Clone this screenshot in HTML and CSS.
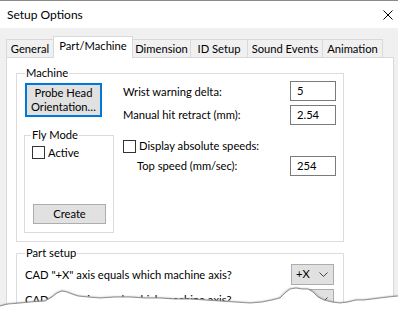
FILE: index.html
```html
<!DOCTYPE html>
<html>
<head>
<meta charset="utf-8">
<link rel="stylesheet" href="styles.css">
</head>
<body>
<div class="window">
  <div class="titlebar">
    <span class="title">Setup Options</span>
    <svg class="close" width="10" height="10" viewBox="0 0 10 10"><path d="M0.5 0.5 L9.5 9.5 M9.5 0.5 L0.5 9.5" stroke="#000" stroke-width="1" fill="none"/></svg>
  </div>
  <div class="body">
    <div class="tabs">
      <div class="tab t-general">General</div>
      <div class="tab active t-part">Part/Machine</div>
      <div class="tab t-dim">Dimension</div>
      <div class="tab t-id">ID Setup</div>
      <div class="tab t-sound">Sound Events</div>
      <div class="tab t-anim">Animation</div>
    </div>
    <div class="panel">
      <fieldset class="group machine">
        <legend>Machine</legend>
        <div class="machine-cols">
          <div class="left-col">
            <div class="btn probe">Probe Head<br>Orientation…</div>
            <fieldset class="group fly">
              <legend>Fly Mode</legend>
              <div class="check"><span class="box"></span><span>Active</span></div>
              <div class="btn create">Create</div>
            </fieldset>
          </div>
          <div class="right-col">
            <div class="row r1"><span class="lbl">Wrist warning delta:</span><span class="input">5</span></div>
            <div class="row r2"><span class="lbl">Manual hit retract (mm):</span><span class="input">2.54</span></div>
            <div class="check check-row"><span class="box"></span><span>Display absolute speeds:</span></div>
            <div class="row r3"><span class="lbl indent">Top speed (mm/sec):</span><span class="input">254</span></div>
          </div>
        </div>
      </fieldset>
      <fieldset class="group part">
        <legend>Part setup</legend>
        <div class="row prow"><span class="lbl">CAD "+X" axis equals which machine axis?</span><span class="combo"><span>+X</span><svg width="9" height="5" viewBox="0 0 9 5"><path d="M0.5 0.5 L4.5 4.5 L8.5 0.5" stroke="#444" stroke-width="1" fill="none"/></svg></span></div>
        <div class="row prow second"><span class="lbl">CAD "+Y" axis equals which machine axis?</span><span class="combo"><span>+Y</span><svg width="9" height="5" viewBox="0 0 9 5"><path d="M0.5 0.5 L4.5 4.5 L8.5 0.5" stroke="#444" stroke-width="1" fill="none"/></svg></span></div>
      </fieldset>
    </div>
  </div>
  <svg class="torn" width="398" height="40" viewBox="0 0 398 40">
    <defs>
      <filter id="blur" x="-5%" y="-50%" width="110%" height="200%"><feGaussianBlur stdDeviation="1.2"/></filter>
    </defs>
    <path d="M0 26 L8 24 L20 23 L30 22 L45 21 L52 17 L57 13 L62 11 L67 12 L72 14 L78 16 L88 17 L100 18 L115 17 L130 17 L145 18 L160 18 L175 19 L190 19 L205 20 L220 21 L235 22 L250 23 L262 22 L272 20 L280 18 L285 13 L290 9 L296 8 L302 9 L308 9 L313 12 L318 17 L324 20 L332 22 L340 23 L348 22 L356 20 L364 20 L372 19 L380 18 L388 17 L398 16" stroke="#777" stroke-width="2.2" fill="none" filter="url(#blur)" transform="translate(0 1)"/>
    <path d="M0 26 L8 24 L20 23 L30 22 L45 21 L52 17 L57 13 L62 11 L67 12 L72 14 L78 16 L88 17 L100 18 L115 17 L130 17 L145 18 L160 18 L175 19 L190 19 L205 20 L220 21 L235 22 L250 23 L262 22 L272 20 L280 18 L285 13 L290 9 L296 8 L302 9 L308 9 L313 12 L318 17 L324 20 L332 22 L340 23 L348 22 L356 20 L364 20 L372 19 L380 18 L388 17 L398 16 L398 40 L0 40 Z" fill="#fff"/>
    <path d="M0 26 L8 24 L20 23 L30 22 L45 21 L52 17 L57 13 L62 11 L67 12 L72 14 L78 16 L88 17 L100 18 L115 17 L130 17 L145 18 L160 18 L175 19 L190 19 L205 20 L220 21 L235 22 L250 23 L262 22 L272 20 L280 18 L285 13 L290 9 L296 8 L302 9 L308 9 L313 12 L318 17 L324 20 L332 22 L340 23 L348 22 L356 20 L364 20 L372 19 L380 18 L388 17 L398 16" stroke="#8a8a8a" stroke-width="0.9" fill="none"/>
  </svg>
</div>
</body>
</html>
```

FILE: styles.css
```css
html, body {
  margin: 0;
  padding: 0;
}
body {
  width: 398px;
  height: 320px;
  overflow: hidden;
  font-family: Lato, "Noto Sans", sans-serif;
  font-size: 11.2px;
  color: #000;
}
.window {
  position: relative;
  height: 320px;
  background: #f0f0f0;
  overflow: hidden;
}
.titlebar {
  box-sizing: border-box;
  height: 28px;
  background: #fff;
  border-top: 1px solid #8a8a8a;
  display: flex;
  align-items: center;
  justify-content: space-between;
  padding: 0 5px 0 7px;
}
.title {
  line-height: 16px;
  font-size: 12px;
}
.close {
  display: block;
}
.body {
  padding: 8px 0 0 6px;
}
.tabs {
  display: flex;
  align-items: flex-end;
  height: 21px;
}
.tab {
  box-sizing: border-box;
  height: 18px;
  border: 1px solid #d9d9d9;
  border-bottom: none;
  background: #f0f0f0;
  display: flex;
  align-items: center;
  justify-content: center;
  line-height: 16px;
  margin-left: -1px;
  white-space: nowrap;
}
.t-general { width: 48px; margin-left: 0; }
.t-part { width: 80px; }
.t-dim { width: 59px; }
.t-id { width: 58px; }
.t-sound { width: 76px; }
.t-anim { width: 61px; }
.tab.active {
  height: 22px;
  margin-bottom: -1px;
  background: #fff;
  position: relative;
  z-index: 1;
  padding-bottom: 3px;
}
.panel {
  box-sizing: border-box;
  width: 388px;
  height: 300px;
  background: #fff;
  border: 1px solid #d9d9d9;
  padding: 0;
}
.group {
  box-sizing: border-box;
  border: 1px solid #dcdcdc;
  margin: 0;
  min-width: 0;
}
.group legend {
  padding: 0 1px;
  line-height: 16px;
}
.machine {
  width: 328px;
  margin: 7px 0 0 9px;
  padding: 2px 7px 8px 8px;
}
.machine-cols {
  display: flex;
  align-items: flex-start;
}
.left-col {
  width: 88px;
  display: flex;
  flex-direction: column;
}
.btn {
  box-sizing: border-box;
  background: #e1e1e1;
  border: 1px solid #adadad;
  display: flex;
  align-items: center;
  justify-content: center;
  text-align: center;
  line-height: 14px;
}
.probe {
  width: 77px;
  height: 34px;
  border: 2px solid #0078d7;
}
.fly {
  width: 90px;
  margin: 10px 0 0 -1px;
  padding: 1px 6px 8px 6px;
}
.check {
  display: flex;
  align-items: center;
  height: 17px;
  line-height: 16px;
}
.box {
  box-sizing: border-box;
  width: 13px;
  height: 13px;
  border: 1px solid #333;
  background: #fff;
  margin-right: 3px;
}
.fly .check {
  margin-left: 1px;
}
.create {
  width: 73px;
  height: 20px;
  margin: 43px 0 0 2px;
}
.right-col {
  flex: 1;
  margin: -2px 0 0 10px;
  display: flex;
  flex-direction: column;
}
.row {
  display: flex;
  align-items: center;
  justify-content: space-between;
  height: 20px;
}
.lbl {
  line-height: 16px;
  white-space: nowrap;
}
.r1 .lbl {
  padding-top: 2px;
}
.r2 {
  margin-top: 4px;
}
.check-row {
  margin-top: 13px;
  height: 16px;
}
.r3 {
  margin-top: 2px;
}
.indent {
  padding-left: 14px;
}
.input {
  box-sizing: border-box;
  width: 46px;
  height: 20px;
  border: 1px solid #7a7a7a;
  background: #fff;
  padding-left: 6px;
  line-height: 17px;
}
.part {
  width: 328px;
  margin: 3px 0 0 9px;
  padding: 3px 9px 8px 8px;
}
.prow .lbl {
  padding-top: 1px;
}
.second {
  margin-top: 5px;
}
.combo {
  box-sizing: border-box;
  width: 43px;
  height: 21px;
  background: #e1e1e1;
  border: 1px solid #adadad;
  display: flex;
  align-items: center;
  justify-content: space-between;
  padding: 0 5px 0 4px;
  line-height: 16px;
}
.combo svg {
  display: block;
}
.torn {
  position: absolute;
  left: 0;
  bottom: 0;
  display: block;
}
```
